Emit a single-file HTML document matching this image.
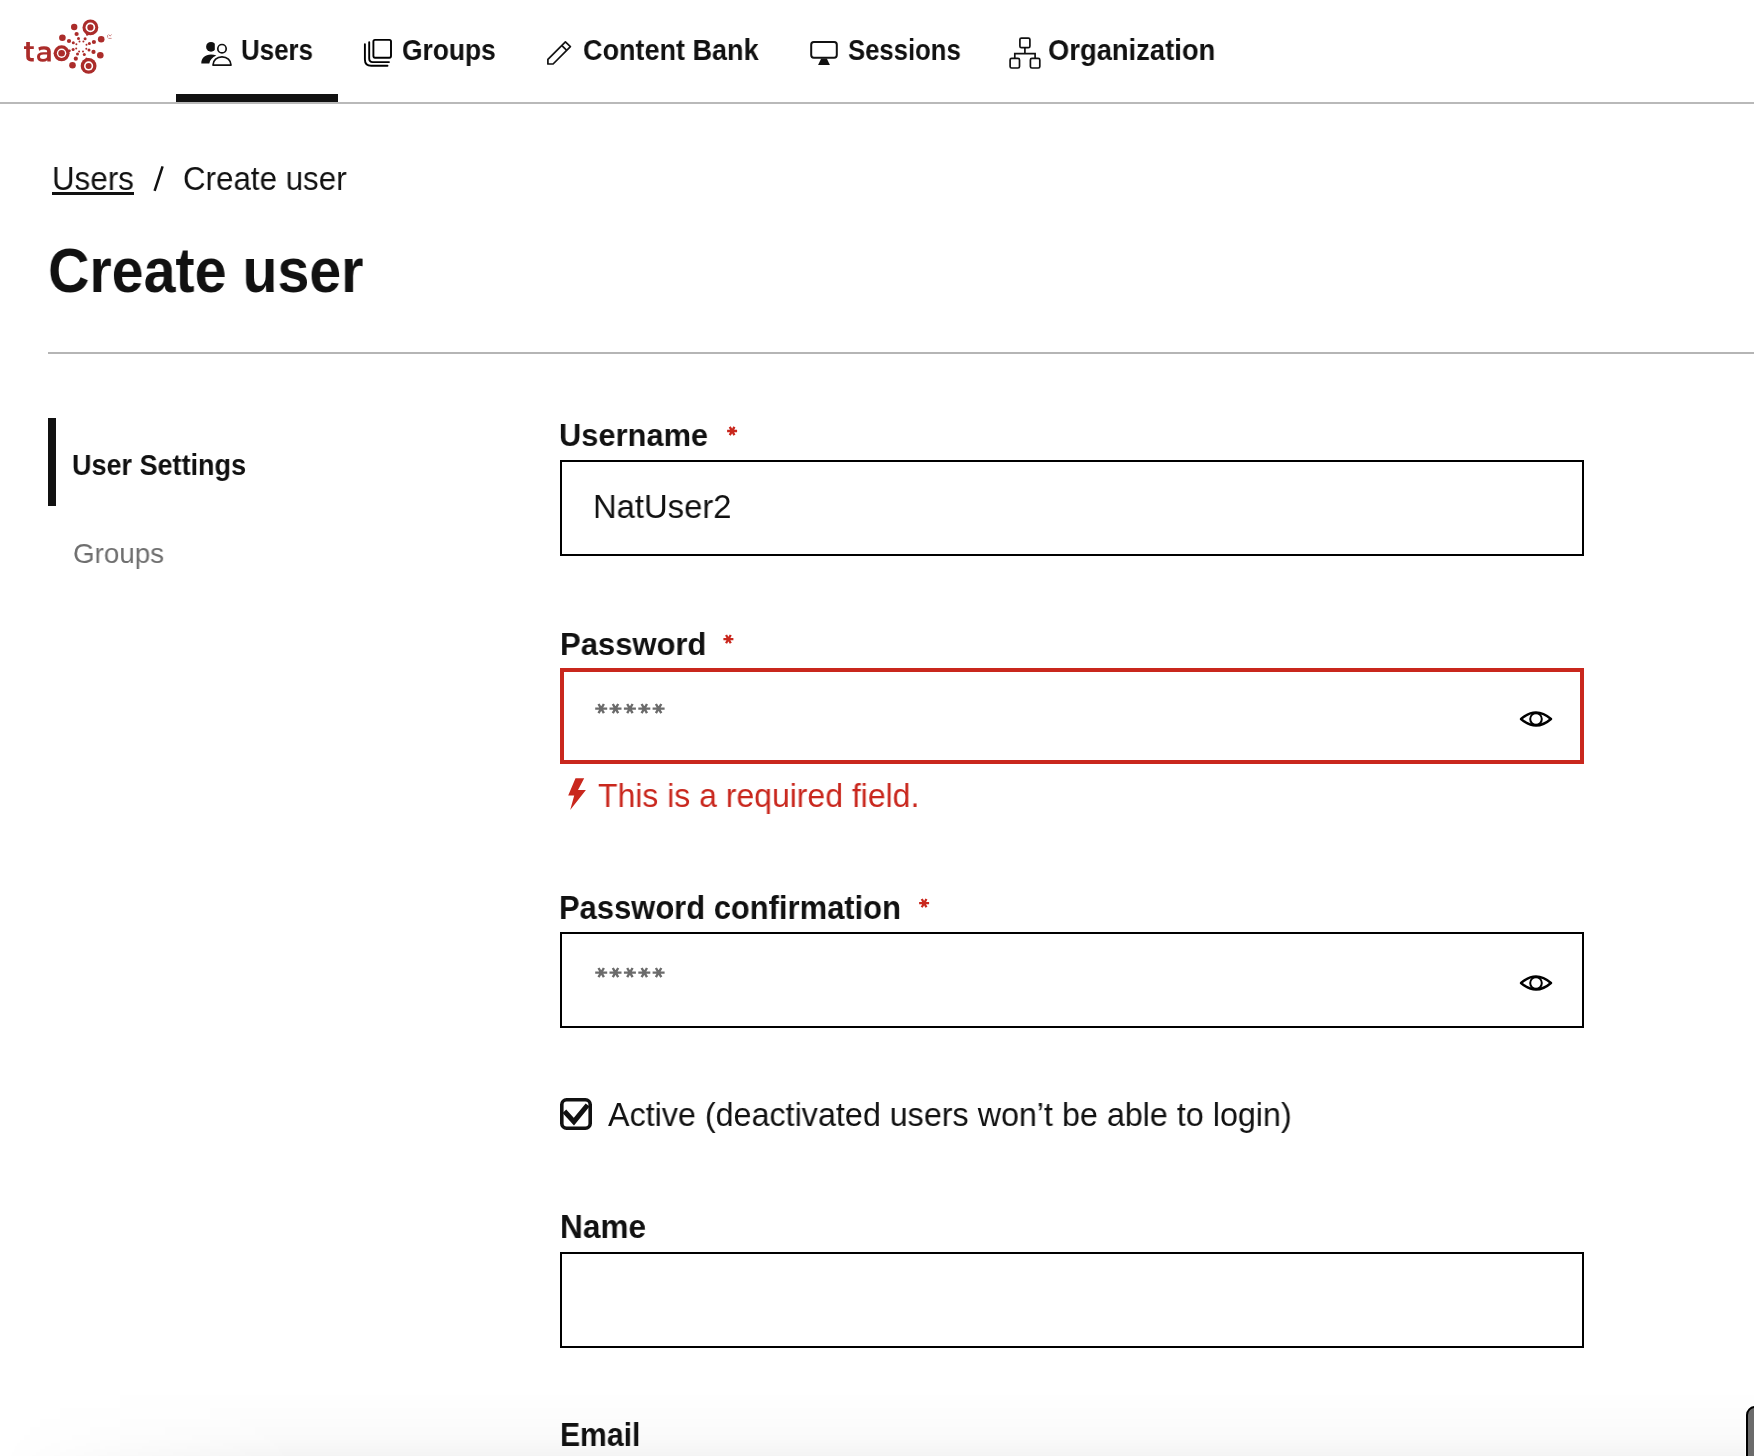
<!DOCTYPE html>
<html>
<head>
<meta charset="utf-8">
<style>
html,body{margin:0;padding:0;background:#fff;}
body{width:1754px;height:1456px;overflow:hidden;position:relative;font-family:"Liberation Sans",sans-serif;color:#111;}
.t{position:absolute;white-space:nowrap;will-change:transform;transform-origin:0 0;}
.b{font-weight:bold;}
.box{position:absolute;box-sizing:border-box;}
svg{position:absolute;left:0;top:0;overflow:visible;}
</style>
</head>
<body>
<div class="box" style="left:0;top:1388px;width:1754px;height:68px;background:linear-gradient(to bottom,rgba(0,0,0,0) 0%,rgba(0,0,0,0.006) 40%,rgba(0,0,0,0.02) 75%,rgba(0,0,0,0.042) 100%);-webkit-mask-image:linear-gradient(to right,transparent 0,rgba(0,0,0,0.5) 120px,#000 300px);"></div>
<!-- header -->
<div class="box" style="left:0;top:102px;width:1754px;height:2px;background:#b9b9b9;"></div>
<div class="box" style="left:176px;top:94px;width:162px;height:8px;background:#111;"></div>

<div id="nav1" class="t b" style="left:241.10px;top:35.02px;font-size:29.51px;line-height:29.51px;color:#111;transform:scaleX(0.8788);">Users</div>
<div id="nav2" class="t b" style="left:401.82px;top:35.02px;font-size:29.51px;line-height:29.51px;color:#111;transform:scaleX(0.8932);">Groups</div>
<div id="nav3" class="t b" style="left:583.22px;top:35.20px;font-size:29.65px;line-height:29.65px;color:#111;transform:scaleX(0.9115);">Content Bank</div>
<div id="nav4" class="t b" style="left:847.70px;top:35.02px;font-size:29.51px;line-height:29.51px;color:#111;transform:scaleX(0.8703);">Sessions</div>
<div id="nav5" class="t b" style="left:1048.49px;top:35.02px;font-size:29.51px;line-height:29.51px;color:#111;transform:scaleX(0.9281);">Organization</div>
<div id="bc1" class="t" style="left:52.19px;top:162.72px;font-size:32.70px;line-height:32.70px;color:#111;transform:scaleX(0.9586);">Users</div>
<div id="bc3" class="t" style="left:183.34px;top:163.32px;font-size:32.70px;line-height:32.70px;color:#111;transform:scaleX(0.9577);">Create user</div>
<div id="h1" class="t b" style="left:48.30px;top:239.17px;font-size:62.65px;line-height:62.65px;color:#111;transform:scaleX(0.9152);">Create user</div>
<div id="sn1" class="t b" style="left:71.74px;top:449.75px;font-size:29.36px;line-height:29.36px;color:#111;transform:scaleX(0.9194);">User Settings</div>
<div id="sn2" class="t" style="left:72.62px;top:539.01px;font-size:28.34px;line-height:28.34px;color:#6e6e6e;transform:scaleX(0.9802);">Groups</div>
<div id="l1" class="t b" style="left:559.20px;top:418.79px;font-size:32.27px;line-height:32.27px;color:#111;transform:scaleX(0.9556);">Username</div>
<div id="v1" class="t" style="left:593.03px;top:489.82px;font-size:33.28px;line-height:33.28px;color:#111;transform:scaleX(0.9854);">NatUser2</div>
<div id="l2" class="t b" style="left:559.56px;top:628.98px;font-size:31.69px;line-height:31.69px;color:#111;transform:scaleX(0.9781);">Password</div>
<div id="err" class="t" style="left:598.03px;top:778.67px;font-size:32.99px;line-height:32.99px;color:#c9271d;transform:scaleX(0.9683);">This is a required field.</div>
<div id="l3" class="t b" style="left:559.25px;top:890.65px;font-size:33.14px;line-height:33.14px;color:#111;transform:scaleX(0.9337);">Password confirmation</div>
<div id="act" class="t" style="left:608.20px;top:1099.14px;font-size:32.56px;line-height:32.56px;color:#111;transform:scaleX(0.9919);">Active (deactivated users won’t be able to login)</div>
<div id="l4" class="t b" style="left:560.05px;top:1210.96px;font-size:32.41px;line-height:32.41px;color:#111;transform:scaleX(0.9741);">Name</div>
<div id="l5" class="t b" style="left:560.43px;top:1418.96px;font-size:32.41px;line-height:32.41px;color:#111;transform:scaleX(0.9293);">Email</div>

<!-- breadcrumb -->
<div class="box" style="left:52px;top:192px;width:82px;height:3px;background:#111;"></div>

<!-- title -->
<div class="box" style="left:48px;top:352px;width:1706px;height:2px;background:#b5b5b5;"></div>

<!-- side nav -->
<div class="box" style="left:48px;top:418px;width:8px;height:88px;background:#111;"></div>

<!-- form -->
<div class="box" style="left:560px;top:460px;width:1024px;height:96px;border:2px solid #000;"></div>

<div class="box" style="left:560px;top:668px;width:1024px;height:96px;border:4px solid #c9271d;"></div>


<div class="box" style="left:560px;top:932px;width:1024px;height:96px;border:2px solid #000;"></div>


<div class="box" style="left:560px;top:1252px;width:1024px;height:96px;border:2px solid #000;"></div>


<div class="box" style="left:1745px;top:1405px;width:30px;height:80px;border-radius:10px;background:#fff;"></div>
<div class="box" style="left:1746px;top:1406px;width:30px;height:80px;border-radius:9px;background:#6b6b6b;border:2px solid #000;"></div>
<!-- icons overlay -->
<svg width="1754" height="1456" viewBox="0 0 1754 1456">
<!-- logo -->
<g fill="#ab2c2a">
<circle cx="90.4" cy="27.4" r="7.9"/>
<path d="M84.5,31 L86.7,36 L90,34.5 Z"/>
<circle cx="61.6" cy="53.3" r="8"/>
<circle cx="69.4" cy="50.8" r="1.4"/>
<circle cx="88.6" cy="65.9" r="7.9"/>
<path d="M84.5,62 L85.9,57.6 L89.5,58.5 Z"/>
<circle cx="74.2" cy="27" r="3.2"/>
<circle cx="62.4" cy="37.7" r="3.3"/>
<circle cx="101.2" cy="39.3" r="3.3"/>
<circle cx="100.3" cy="55.2" r="3.3"/>
<circle cx="72.5" cy="65.3" r="3.3"/>
<circle cx="76.6" cy="34" r="2.1"/>
<circle cx="69" cy="41" r="2.1"/>
<circle cx="93.9" cy="42" r="2.1"/>
<circle cx="93.5" cy="51.9" r="2.1"/>
<circle cx="75.8" cy="58.7" r="2.1"/>
<circle cx="78.5" cy="38.5" r="1.5"/>
<circle cx="73.3" cy="42.8" r="1.5"/>
<circle cx="73.1" cy="49.4" r="1.5"/>
<circle cx="77.5" cy="54.1" r="1.5"/>
<circle cx="84.3" cy="54.4" r="1.5"/>
<circle cx="89" cy="50" r="1.5"/>
<circle cx="89.4" cy="43.6" r="1.5"/>
<circle cx="85.1" cy="38.7" r="1.5"/>
<circle cx="79.5" cy="41.4" r="1"/>
<circle cx="76.4" cy="44.3" r="1"/>
<circle cx="76.2" cy="48.4" r="1"/>
<circle cx="79.1" cy="51.5" r="1"/>
<circle cx="83" cy="51.5" r="1"/>
<circle cx="86.3" cy="48.8" r="1"/>
<circle cx="86.5" cy="44.7" r="1"/>
<circle cx="83.4" cy="41.6" r="1"/>
</g>
<g fill="#fff">
<circle cx="90.4" cy="27.4" r="4.85"/>
<circle cx="61.6" cy="53.3" r="4.7"/>
<circle cx="88.6" cy="65.9" r="4.6"/>
</g>
<g fill="#ab2c2a">
<circle cx="90.4" cy="27.4" r="3.1"/>
<circle cx="61.6" cy="53.3" r="3.3"/>
<circle cx="88.6" cy="65.9" r="3"/>
</g>
<g fill="none" stroke="#ab2c2a" stroke-width="0.9" opacity="0.6"><path d="M107.6,35.1 V37.6 M108.6,34.4 L110,36.1 L111.7,34.5 M108.4,38.4 H111.6"/></g>
<path fill="#ab2c2a" fill-rule="evenodd" d="M26.2,41.9 H29.9 V46.2 H33.8 V48.9 H29.9 V56.4 Q29.9,57.9 31.4,57.9 H33.8 V61.4 H31 Q26.2,61.4 26.2,56.6 V48.9 H24 V46.2 H26.2 Z
M38.3,47.6 Q40.8,46.2 44,46.2 Q50.8,46.2 50.8,51.6 V61.6 H47.3 V60.3 Q45.6,61.8 42.8,61.8 Q37,61.8 37,56.8 Q37,52.2 43.3,52.2 H47.1 V51.4 Q47.1,49.5 44,49.5 Q41.4,49.5 39.2,50.7 Z
M47.1,54.4 H43.4 Q40,54.4 40,56.7 Q40,58.9 43,58.9 Q47.1,58.9 47.1,56.3 Z"/>
<!-- users icon --><clipPath id="chead"><rect x="200" y="40" width="14.8" height="14"/></clipPath>
<g fill="#111">
<circle cx="211" cy="46.8" r="4.9" clip-path="url(#chead)"/>
<path d="M201.3,63.6 C201.3,58.2 205,54.6 211,54.6 C213,54.6 214.8,54.9 216.3,55.6 C212.2,57.6 209.9,60.2 209.3,63.6 Z"/>
</g>
<g fill="none" stroke="#111" stroke-width="1.7">
<circle cx="222" cy="48.7" r="4.2"/>
<path d="M213,65.1 C213,60.2 217,56.8 222,56.8 C227,56.8 231,60.2 231,65.1 Z" stroke-linejoin="round"/>
</g>
<!-- groups icon -->
<g fill="none" stroke="#000" stroke-width="1.9" stroke-linecap="round">
<rect x="373.4" y="39.9" width="17.6" height="17.8" rx="1.6"/>
<path d="M369.2,42.2 V58.6 Q369.2,62.1 372.7,62.1 H389"/>
<path d="M364.9,44.2 V59.5 Q364.9,65.8 371.2,65.8 H387.5"/>
</g>
<!-- pencil -->
<g fill="none" stroke="#111" stroke-width="1.7" stroke-linejoin="round">
<path d="M547.9,64 V59.3 L565.4,41.8 L570.4,46.6 L553.1,64 Z"/>
<path d="M561.9,45.6 L566.5,50.2"/>
</g>
<!-- sessions -->
<rect x="811.2" y="42.1" width="25.6" height="15.6" rx="2.6" fill="none" stroke="#111" stroke-width="2"/>
<path d="M821.2,58.4 L826.8,58.4 L829.9,64.9 L818.1,64.9 Z" fill="#111"/>
<!-- organization -->
<g fill="none" stroke="#111" stroke-width="1.7">
<rect x="1019.9" y="38.1" width="10" height="9.6" rx="1.5"/>
<rect x="1010.1" y="58.4" width="9.4" height="9.6" rx="1.5"/>
<rect x="1030.4" y="58.4" width="9.4" height="9.6" rx="1.5"/>
<path d="M1024.9,47.7 V53.6 M1014.8,58.4 V53.6 H1035.1 V58.4"/>
</g>
<!-- asterisks -->
<path d="M727.10,431.00H737.10M729.75,426.90L734.45,435.10M734.45,426.90L729.75,435.10M723.40,639.10H733.40M726.05,635.00L730.75,643.20M730.75,635.00L726.05,643.20M919.10,903.10H929.10M921.75,899.00L926.45,907.20M926.45,899.00L921.75,907.20" stroke="#c9271d" stroke-width="2.3" fill="none"/>
<path d="M595.20,708.60H607.20M598.50,704.00L603.90,713.20M603.90,704.00L598.50,713.20M609.50,708.60H621.50M612.80,704.00L618.20,713.20M618.20,704.00L612.80,713.20M623.90,708.60H635.90M627.20,704.00L632.60,713.20M632.60,704.00L627.20,713.20M638.30,708.60H650.30M641.60,704.00L647.00,713.20M647.00,704.00L641.60,713.20M652.60,708.60H664.60M655.90,704.00L661.30,713.20M661.30,704.00L655.90,713.20M595.20,972.60H607.20M598.50,968.00L603.90,977.20M603.90,968.00L598.50,977.20M609.50,972.60H621.50M612.80,968.00L618.20,977.20M618.20,968.00L612.80,977.20M623.90,972.60H635.90M627.20,968.00L632.60,977.20M632.60,968.00L627.20,977.20M638.30,972.60H650.30M641.60,968.00L647.00,977.20M647.00,968.00L641.60,977.20M652.60,972.60H664.60M655.90,968.00L661.30,977.20M661.30,968.00L655.90,977.20" stroke="#6b6b6b" stroke-width="2.4" fill="none"/>
<!-- slash -->
<path d="M162.6,166.3 L154.6,190.9" stroke="#111" stroke-width="2.5" fill="none"/>
<!-- eye icons -->
<g fill="none" stroke="#000" stroke-width="2.4">
<path d="M1521,719 Q1536,706 1551,719 Q1536,732 1521,719 Z" stroke-linejoin="round"/>
<circle cx="1536" cy="719" r="5.8" stroke-width="2"/>
<path d="M1521,983 Q1536,970 1551,983 Q1536,996 1521,983 Z" stroke-linejoin="round"/>
<circle cx="1536" cy="983" r="5.8" stroke-width="2"/>
</g>
<!-- lightning -->
<path d="M575.5,778.2 L584.2,778.2 L578,790.1 L585.9,790.1 L570.2,809.9 L574.2,795.6 L568.2,795.6 Z" fill="#c9271d"/>
<!-- checkbox -->
<rect x="561.8" y="1099.8" width="28.4" height="28.4" rx="4.8" fill="none" stroke="#111" stroke-width="3.6"/>
<path d="M564.4,1111.3 L573.9,1121.6 L587.6,1105" fill="none" stroke="#111" stroke-width="5"/>
</svg>
</body>
</html>
